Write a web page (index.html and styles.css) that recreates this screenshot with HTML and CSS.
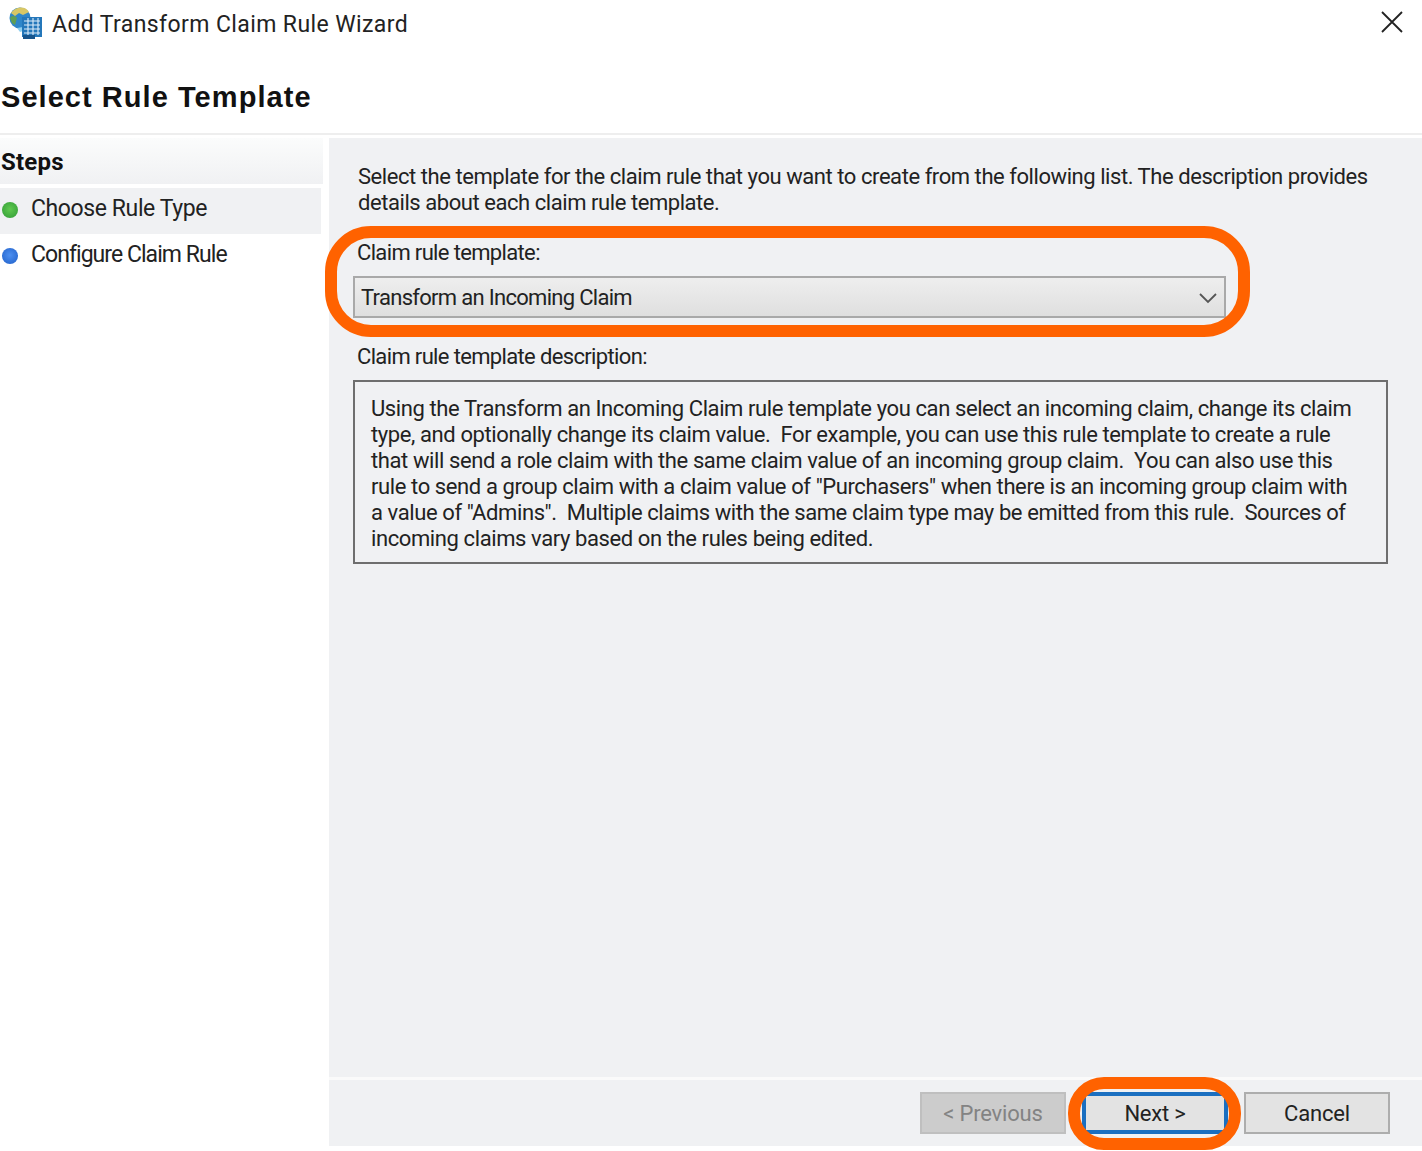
FILE: index.html
```html
<!DOCTYPE html>
<html lang="en">
<head>
<meta charset="utf-8">
<title>Add Transform Claim Rule Wizard</title>
<link rel="stylesheet" href="styles.css">
</head>
<body>
<div class="window">
  <div class="titlebar">
    <svg class="app-icon" width="36" height="36" viewBox="0 0 36 36">
      <circle cx="12" cy="12" r="10.5" fill="#2f86c9"/>
      <path d="M3 7c4-6 14-8 18-1l-6 3-4-2-4 3z" fill="#d8c765"/>
      <path d="M2 12c2-3 6-2 7 0l-2 7-3-2z" fill="#5f9e55"/>
      <path d="M9 22l6-1v4l-3 1z" fill="#8fd0f0"/>
      <rect x="14" y="11" width="20" height="20" fill="#2477ba"/>
      <path d="M16 15h16M16 19h16M16 23h16M16 27h16M20 12v17M25 12v17M30 12v17" stroke="#dcedf9" stroke-width="1.1"/>
      <rect x="15" y="29" width="12" height="4" fill="#17548c"/>
    </svg>
    <span class="title">Add Transform Claim Rule Wizard</span>
    <svg class="close" width="24" height="24" viewBox="0 0 24 24">
      <path d="M2 2l20 20M22 2L2 22" stroke="#222" stroke-width="1.8" fill="none"/>
    </svg>
  </div>
  <div class="header"><h1>Select Rule Template</h1></div>
  <div class="body">
    <aside class="steps">
      <div class="steps-head">Steps</div>
      <div class="step current"><span class="dot green"></span>Choose Rule Type</div>
      <div class="step tight"><span class="dot blue"></span>Configure Claim Rule</div>
    </aside>
    <main class="panel">
      <div class="content">
        <p class="intro">Select the template for the claim rule that you want to create from the following list. The description provides<br>details about each claim rule template.</p>
        <div class="label first">Claim rule template:</div>
        <div class="combo">
          <span>Transform an Incoming Claim</span>
          <svg width="20" height="12" viewBox="0 0 20 12"><path d="M2 2l8 8 8-8" stroke="#555" stroke-width="1.8" fill="none"/></svg>
        </div>
        <div class="label second">Claim rule template description:</div>
        <div class="desc">Using the Transform an Incoming Claim rule template you can select an incoming claim, change its claim<br>type, and optionally change its claim value.&nbsp; For example, you can use this rule template to create a rule<br>that will send a role claim with the same claim value of an incoming group claim.&nbsp; You can also use this<br>rule to send a group claim with a claim value of "Purchasers" when there is an incoming group claim with<br>a value of "Admins".&nbsp; Multiple claims with the same claim type may be emitted from this rule.&nbsp; Sources of<br>incoming claims vary based on the rules being edited.</div>
      </div>
      <div class="footer">
        <button class="btn disabled">&lt; Previous</button>
        <button class="btn primary">Next &gt;</button>
        <button class="btn">Cancel</button>
      </div>
    </main>
  </div>
</div>
<div class="ring ring-combo"></div>
<div class="ring ring-next"></div>
</body>
</html>
```
FILE: styles.css
```css
html, body { margin: 0; padding: 0; }
body {
  width: 1422px; height: 1151px; overflow: hidden; position: relative;
  background: #fff; color: #1c1c1c;
  font-family: Roboto, "Open Sans", sans-serif;
}
.window { display: flex; flex-direction: column; height: 1151px; }
.titlebar { height: 48px; display: flex; align-items: center; padding: 0 18px 0 8px; flex: none; }
.app-icon { width: 36px; height: 36px; margin-right: 8px; flex: none; }
.title { font-size: 23px; letter-spacing: 0.4px; color: #222; flex: 1; }
.close { flex: none; margin-bottom: 4px; }
.header { border-bottom: 2px solid #eeeeee; flex: none; box-sizing: border-box; height: 87px; display: flex; align-items: center; padding-top: 13px; }
h1 { margin: 0 0 0 1px; font-family: "Liberation Sans", sans-serif; font-size: 29px; font-weight: 700; color: #111; letter-spacing: 1.05px; }
.body { flex: 1; display: flex; gap: 6px; padding-top: 3px; padding-bottom: 5px; min-height: 0; }
.steps { width: 323px; flex: none; background: #fff; }
.steps-head {
  height: 46px; box-sizing: border-box; padding: 2px 0 0 1px; background: linear-gradient(#fbfcfc, #f0f1f3); display: flex; align-items: center;
  font-weight: 700; font-size: 24px; letter-spacing: 0.2px; color: #111;
}
.step { height: 46px; width: 321px; box-sizing: border-box; padding-bottom: 5px; display: flex; align-items: center; font-size: 23px; letter-spacing: -0.4px; color: #222; }
.step.tight { letter-spacing: -0.95px; }
.step.current { background: #f0f1f3; margin-top: 4px; }
.dot { width: 16px; height: 16px; border-radius: 50%; margin: 2px 13px 0 2px; flex: none; }
.dot.green { background: radial-gradient(circle at 50% 45%, #5fc94e, #2f9a36); }
.dot.blue { background: radial-gradient(circle at 50% 45%, #4d8ff0, #1f5fc8); }
.panel { flex: 1; display: flex; flex-direction: column; background: #f0f1f3; min-width: 0; }
.content { flex: 1; padding: 26px 34px 0 24px; min-height: 0; }
.intro { margin: 0 0 0 5px; font-size: 22px; line-height: 26px; letter-spacing: -0.44px; color: #222; white-space: nowrap; }
.label { font-size: 22px; line-height: 26px; letter-spacing: -0.65px; color: #222; margin-left: 4px; }
.label.first { margin-top: 24px; }
.label.second { margin-top: 26px; }
.combo {
  margin-top: 10px; width: 873px; height: 42px; box-sizing: border-box; border: 2px solid #a9a9a9;
  background: linear-gradient(#eeeeee, #dfdfdf);
  display: flex; align-items: center; justify-content: space-between;
  padding: 1px 6px 0 6px; font-size: 22px; letter-spacing: -0.7px; color: #222;
}
.desc {
  margin-top: 10px; width: 1035px; height: 184px; box-sizing: border-box; border: 2px solid #6e6e6e;
  padding: 14px 16px; font-size: 22px; line-height: 26px; letter-spacing: -0.4px; color: #222; white-space: nowrap;
}
.footer {
  height: 69px; flex: none; box-sizing: border-box; border-top: 3px solid #fafafa;
  display: flex; align-items: flex-start; justify-content: flex-end; gap: 16px; padding: 12px 32px 0 0;
}
.btn {
  width: 146px; height: 42px; box-sizing: border-box; border: 2px solid #adadad; background: #e3e3e3;
  font-family: Roboto, sans-serif; font-size: 22px; letter-spacing: -0.2px; color: #222; padding: 1px 0 0; margin: 0;
}
.btn.disabled { background: #cccccc; border-color: #bfbfbf; color: #838383; }
.btn.primary { border: 4px solid #1b6fc0; }
.ring { position: absolute; box-sizing: border-box; border: 12px solid #ff6200; }
.ring-combo { left: 325px; top: 226px; width: 925px; height: 111px; border-radius: 46px; }
.ring-next { left: 1068px; top: 1077px; width: 173px; height: 73px; border-radius: 36px; }
```
